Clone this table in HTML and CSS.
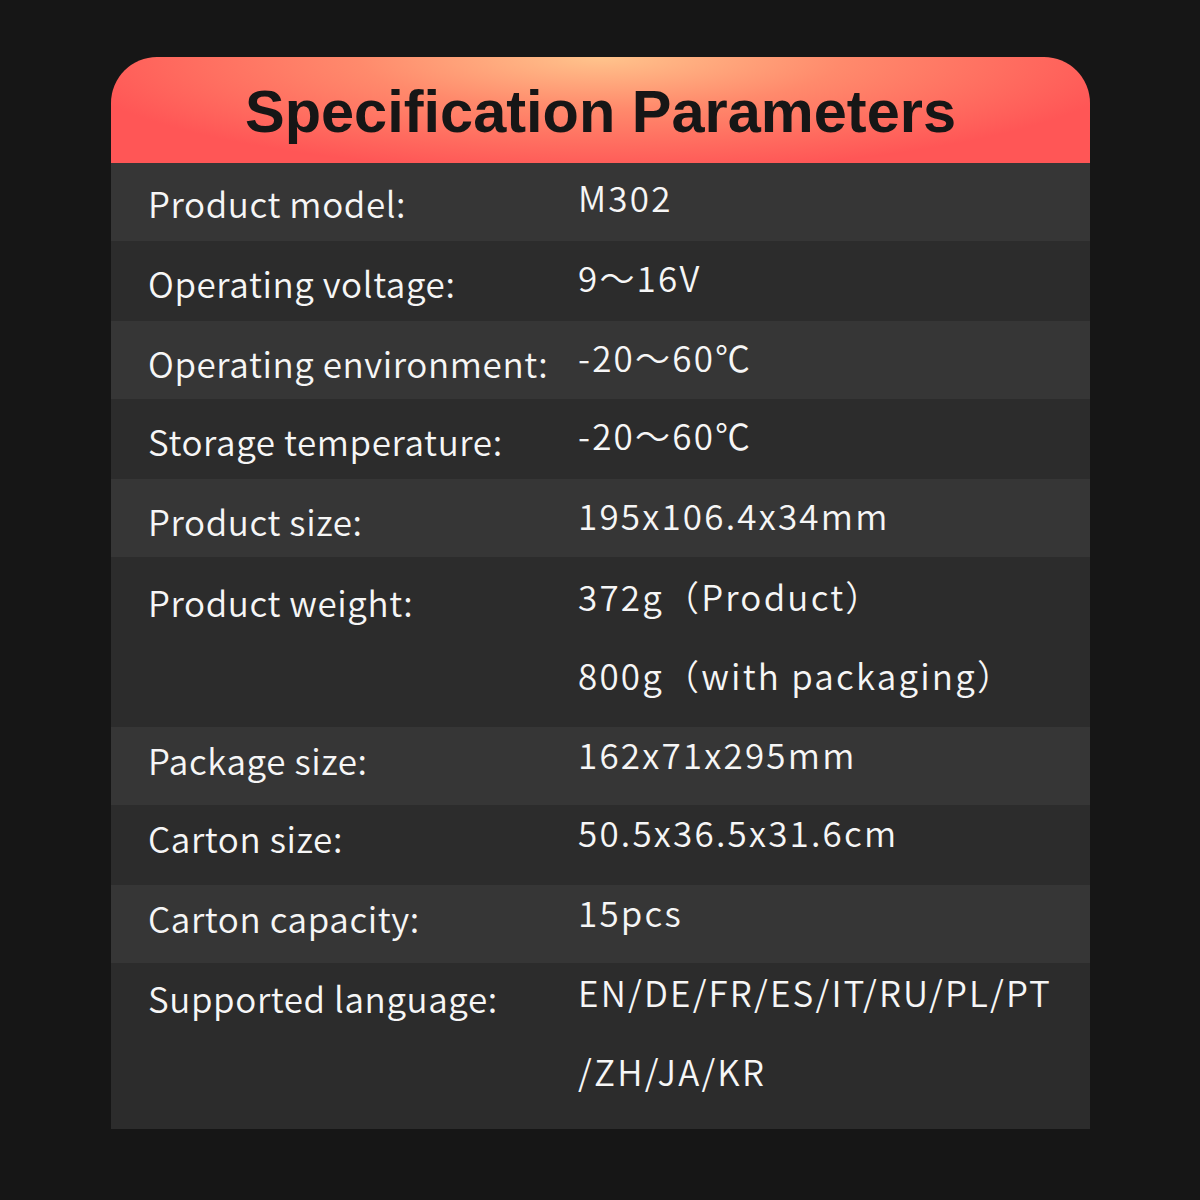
FILE: index.html
```html
<!DOCTYPE html>
<html>
<head>
<meta charset="utf-8">
<link rel="stylesheet" href="styles.css">
</head>
<body>
<div class="card">
  <div class="header"><h1 class="title">Specification Parameters</h1></div>
  <div class="rows">
    <div class="row light first"><div class="label">Product model:</div><div class="value">M302</div></div>
    <div class="row dark"><div class="label">Operating voltage:</div><div class="value">9～16V</div></div>
    <div class="row light"><div class="label">Operating environment:</div><div class="value">-20～60℃</div></div>
    <div class="row dark"><div class="label">Storage temperature:</div><div class="value">-20～60℃</div></div>
    <div class="row light"><div class="label">Product size:</div><div class="value">195x106.4x34mm</div></div>
    <div class="row dark multi"><div class="label">Product weight:</div><div class="value">372g（Product）<br>800g（with packaging）</div></div>
    <div class="row light post"><div class="label">Package size:</div><div class="value">162x71x295mm</div></div>
    <div class="row dark post"><div class="label">Carton size:</div><div class="value">50.5x36.5x31.6cm</div></div>
    <div class="row light post"><div class="label">Carton capacity:</div><div class="value">15pcs</div></div>
    <div class="row dark multi post last"><div class="label">Supported language:</div><div class="value">EN/DE/FR/ES/IT/RU/PL/PT<br>/ZH/JA/KR</div></div>
  </div>
</div>
</body>
</html>
```
FILE: styles.css
```css
html, body {
  margin: 0;
  padding: 0;
  background: #161616;
  width: 1200px;
  height: 1200px;
}
.card {
  margin: 57px 0 0 111px;
  width: 979px;
}
.header {
  height: 106px;
  border-radius: 46px 46px 0 0;
  background: radial-gradient(ellipse 540px 115px at 50% 0%, #ffc48c 0%, #ff8a6c 45%, #ff5656 100%);
  display: flex;
  align-items: center;
  justify-content: center;
}
.title {
  margin: 0;
  font-family: "Liberation Sans", Arial, sans-serif;
  font-weight: bold;
  font-size: 59.5px;
  color: #161616;
  line-height: 1;
  padding-top: 4px;
}
.row {
  display: grid;
  grid-template-columns: 430px 1fr;
  align-items: start;
  padding-left: 37px;
  height: 78px;
  color: #f6f6f6;
  font-family: "Noto Sans CJK JP", sans-serif;
  font-weight: 350;
  font-size: 35px;
}
.light { background: #363636; }
.dark { background: #2c2c2c; height: 80px; }
.multi { height: 170px; }
.last { height: 166px; }
.label {
  line-height: 79px;
  letter-spacing: 0.6px;
  margin-top: 2px;
}
.value {
  line-height: 79px;
  letter-spacing: 2.2px;
  margin-top: -4px;
}
.first .label { margin-top: 0; }
.first .value { margin-top: -6px; }
.multi .label { margin-top: 5px; }
.multi .value { margin-top: -1px; }
.post .label { margin-top: -7px; }
.post .value { margin-top: -13px; }
.last .label { margin-top: -5px; }
.last .value { margin-top: -11px; }
```
